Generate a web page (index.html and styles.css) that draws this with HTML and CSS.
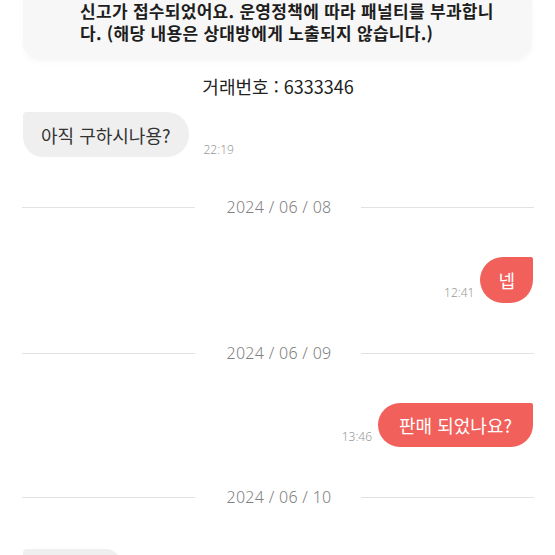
FILE: index.html
```html
<!DOCTYPE html>
<html lang="ko">
<head>
<meta charset="utf-8">
<link rel="stylesheet" href="styles.css">
</head>
<body>
<div class="chat">
  <div class="notice">신고가 접수되었어요. 운영정책에 따라 패널티를 부과합니<br>다. (해당 내용은 상대방에게 노출되지 않습니다.)</div>
  <div class="trade">거래번호 : 6333346</div>

  <div class="row row-in first">
    <div class="bubble in">아직 구하시나용?</div>
    <span class="time in-time">22:19</span>
  </div>

  <div class="divider"><span class="line"></span><span class="date">2024 / 06 / 08</span><span class="line"></span></div>

  <div class="row row-out">
    <span class="time out-time">12:41</span>
    <div class="bubble out narrow">넵</div>
  </div>

  <div class="divider"><span class="line"></span><span class="date">2024 / 06 / 09</span><span class="line"></span></div>

  <div class="row row-out">
    <span class="time out-time">13:46</span>
    <div class="bubble out">판매 되었나요?</div>
  </div>

  <div class="divider"><span class="line"></span><span class="date">2024 / 06 / 10</span><span class="line"></span></div>

  <div class="row row-in last">
    <div class="bubble in stub"></div>
  </div>
</div>
</body>
</html>
```

FILE: styles.css
```css
html, body {
  margin: 0;
  padding: 0;
  background: #ffffff;
  overflow: hidden;
}

body {
  font-family: "Noto Sans CJK KR", "Noto Sans", sans-serif;
  color: #222;
}

.chat {
  display: flex;
  flex-direction: column;
  padding: 0 22px 0 23px;
  height: 555px;
  overflow: hidden;
}

.notice {
  background: #f7f7f7;
  border-radius: 0 0 18px 18px;
  padding: 0 20px 16px 57px;
  font-size: 17px;
  font-weight: 700;
  line-height: 22px;
  letter-spacing: 0.3px;
  color: #1e1e1e;
  margin-right: 1px;
  white-space: nowrap;
  box-shadow: 0 2px 6px rgba(0, 0, 0, 0.03);
}

.trade {
  margin-top: 14px;
  text-align: center;
  font-size: 18px;
  line-height: 24px;
  color: #222;
}

.row {
  display: flex;
  align-items: flex-end;
}

.row.first {
  margin-top: 14px;
}

.row.last {
  margin-top: 40px;
}

.row-out {
  justify-content: flex-end;
  margin-top: 38px;
}

.bubble {
  display: flex;
  align-items: center;
  font-size: 18px;
  line-height: 24px;
  white-space: nowrap;
}

.bubble.in {
  height: 45px;
  padding: 0 18px;
  background: #efefef;
  color: #333;
  border-radius: 4px 22px 22px 20px;
}

.bubble.out {
  height: 44px;
  padding: 0 21px;
  background: #f2605c;
  color: #fff;
  border-radius: 22px 2px 22px 22px;
}

.bubble.narrow {
  height: 46px;
  padding: 0 18px;
  border-radius: 23px 2px 23px 23px;
}

.bubble.stub {
  width: 97px;
  height: 30px;
  padding: 0;
  border-radius: 4px 14px 0 0;
}

.time {
  font-family: "Noto Sans", sans-serif;
  font-size: 12px;
  line-height: 14px;
  color: #9a9a9a;
  font-weight: 300;
}

.in-time {
  margin-left: 15px;
  margin-bottom: 0;
}

.out-time {
  margin-right: 6px;
  margin-bottom: 3px;
}

.divider {
  display: flex;
  align-items: center;
  margin: 38px -1px 0 -1px;
  height: 24px;
}

.line {
  flex: 1;
  height: 1px;
  background: #e2e2e2;
}

.date {
  margin: 0 29px 0 31px;
  font-family: "Noto Sans", sans-serif;
  font-weight: 300;
  font-size: 16px;
  line-height: 24px;
  color: #808080;
  letter-spacing: 0.3px;
}
```
